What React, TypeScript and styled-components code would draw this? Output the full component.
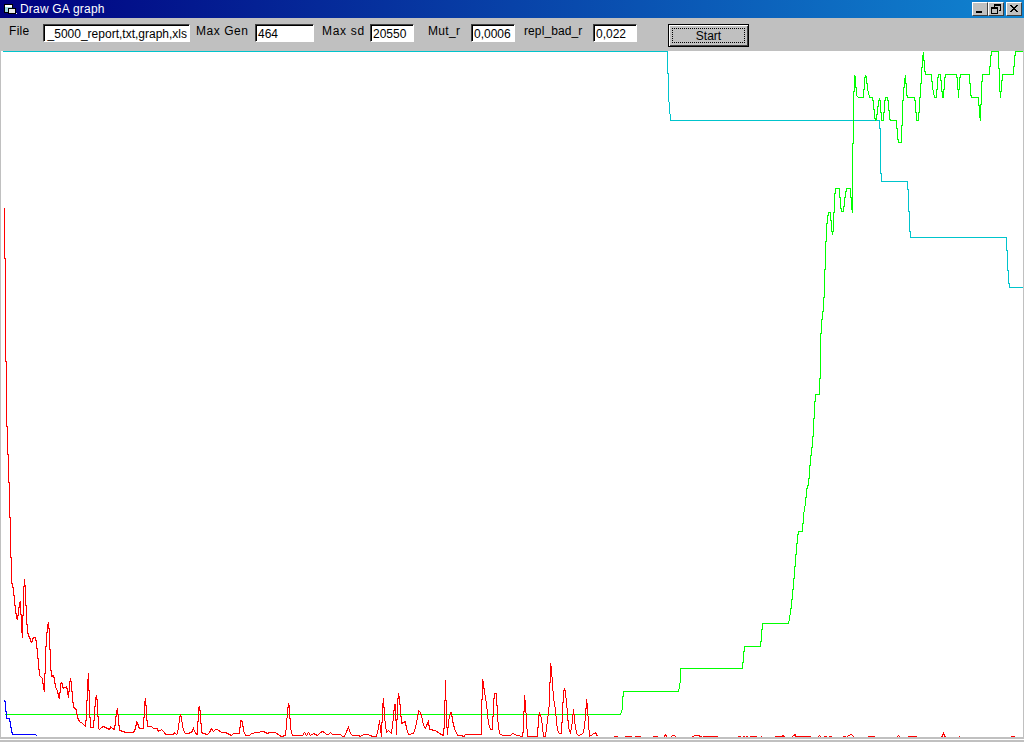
import styled, { createGlobalStyle } from "styled-components";

const GlobalStyle = createGlobalStyle`
  html, body {
    margin: 0;
    padding: 0;
    background: #c0c0c0;
  }
`;

const Window = styled.div`
  width: 1024px;
  height: 742px;
  display: flex;
  flex-direction: column;
  overflow: hidden;
  background: #c0c0c0;
  font-family: "Liberation Sans", Arial, sans-serif;
  font-size: 12px;
  color: #000;
`;

const TitleBar = styled.div`
  height: 18px;
  flex: none;
  display: flex;
  align-items: center;
  padding: 0 2px 0 4px;
  background: linear-gradient(90deg, #000080 0%, #1084d0 100%);
  color: #fff;
`;

const TitleText = styled.span`
  margin-left: 3px;
  letter-spacing: 0.2px;
`;

const TitleButtons = styled.div`
  margin-left: auto;
  display: flex;
`;

const TitleButton = styled.div<{ $gap?: number }>`
  width: 16px;
  height: 14px;
  box-sizing: border-box;
  margin-left: ${(props) => props.$gap ?? 0}px;
  display: flex;
  align-items: center;
  justify-content: center;
  background: #c0c0c0;
  border: 1px solid;
  border-color: #fff #404040 #404040 #fff;
`;

const Toolbar = styled.div`
  height: 33px;
  flex: none;
  display: flex;
  align-items: flex-start;
  padding-top: 6px;
  box-sizing: border-box;
`;

const Label = styled.span<{ $left: number; $width: number; $tracking?: number }>`
  margin-left: ${(props) => props.$left}px;
  width: ${(props) => props.$width}px;
  flex: none;
  line-height: 15px;
  letter-spacing: ${(props) => props.$tracking ?? 0.3}px;
  white-space: nowrap;
`;

const TextBox = styled.div<{ $left: number; $width: number; $right?: boolean }>`
  margin-left: ${(props) => props.$left}px;
  width: ${(props) => props.$width}px;
  height: 18px;
  flex: none;
  box-sizing: border-box;
  display: flex;
  align-items: center;
  justify-content: ${(props) => (props.$right ? "flex-end" : "flex-start")};
  padding: 1px 2px 0;
  overflow: hidden;
  white-space: nowrap;
  background: #fff;
  border: 1px solid;
  border-color: #404040 #fff #fff #404040;
  box-shadow: inset 1px 1px 0 #000;
`;

const StartButton = styled.div`
  margin-left: 31px;
  width: 81px;
  height: 23px;
  flex: none;
  box-sizing: border-box;
  padding: 3px;
  background: #c0c0c0;
  border: 1px solid #000;
  box-shadow: inset 1px 1px 0 #fff, inset -1px -1px 0 #404040;
`;

const StartFocus = styled.div`
  height: 100%;
  box-sizing: border-box;
  display: flex;
  align-items: center;
  justify-content: center;
  border: 1px dotted #000;
`;

const Plot = styled.div`
  height: 686px;
  flex: none;
  margin: 0 1px;
  background: #fff;
`;

const Chart = styled.svg`
  display: block;
`;

const Footer = styled.div`
  height: 5px;
  flex: none;
  box-sizing: border-box;
  border-top: 2px solid #c0c0c0;
  border-bottom: 2px solid #c0c0c0;
  background: #fff;
`;

const redMain =
  "4,207 4,258 5,258 5,361 6,361 6,426 7,426 7,454 8,454 8,482 9,482 9,517 10,517 10,557 11,557 11,581 13,589 14,600 15,610 16,616 17,619 18,610 19,604 20,600 21,627 22,637 23,593 24,578 25,592 26,617 27,631 28,635 30,639 31,642 32,639 33,637 35,637 36,642 37,653 38,662 39,675 41,677 42,678 43,687 44,691 45,654 46,637 47,627 48,621 49,635 50,663 51,676 53,675 54,678 55,687 57,690 58,695 59,698 60,685 61,681 62,685 63,688 66,686 67,690 68,697 69,685 70,677 71,685 72,697 73,707 75,708 76,710 77,717 79,721 82,723 85,726 86,713 87,686 88,672 89,707 90,727 93,727 94,712 95,700 96,694 97,703 98,728 99,729 101,727 103,726 107,728 109,729 110,726 112,728 114,729 115,720 116,712 117,707 118,720 119,730 123,731 125,732 133,732 135,728 136,721 138,725 139,728 143,728 144,705 145,697 146,713 147,726 151,726 153,728 157,728 158,731 161,729 164,732 165,734 173,734 174,732 176,734 177,733 179,719 180,713 181,718 183,730 185,733 187,733 191,732 193,728 195,733 197,734 198,707 199,706 200,713 201,732 203,733 207,734 209,732 211,728 213,731 215,729 217,729 221,732 225,732 229,734 231,735 233,733 239,733 240,720 242,721 243,730 245,735 249,735 251,733 257,732 263,731 267,733 269,732 275,732 279,735 281,736 285,735 287,712 288,702 289,708 290,728 292,735 302,735 304,732 306,735 308,732 310,735 313,733 317,735 320,732 322,731 324,732 326,734 328,734 330,732 332,734 340,734 342,736 344,736 346,731 348,727 350,733 352,735 358,735 360,736 363,734 367,734 370,735 372,736 376,736 378,728 379,720 381,736 382,708 383,697 384,717 386,732 388,730 391,733 393,717 394,703 395,705 396,734 397,703 398,692 399,700 400,708 401,723 405,721 406,728 408,734 413,733 415,727 417,717 418,710 420,712 421,715 423,725 425,728 428,720 429,729 435,730 439,733 443,735 444,720 445,679 446,720 447,734 448,720 450,713 451,711 452,720 454,728 457,735 462,735 463,737 465,734 481,734 481,720 482,678 483,683 484,692 486,703 488,723 490,729 492,729 493,703 494,693 496,693 497,717 499,733 502,735 510,735 512,733 517,735 522,736 523,727 524,694 525,705 527,736 537,736 538,718 539,712 541,718 543,736 545,736 547,720 549,702 550,662 551,670 553,697 555,710 557,730 559,733 561,733 562,710 563,693 564,687 565,692 567,712 568,727 570,733 572,720 573,708 574,720 576,733 578,735 583,733 585,717 586,698 587,708 589,736 592,734 595,732 597,736";

const redDashes = [
  "614,736 620,737 624,737 626,736 631,736",
  "634,736 637,736 640,736",
  "652,736 657,736",
  "664,736 665,734 667,737",
  "670,737 672,735 674,735 676,737",
  "692,736 695,735 698,735 702,737 704,736 717,736",
  "735,737 740,736 741,737 744,736 745,737 747,736 748,737 751,736 754,736 759,737 762,736",
  "774,736 781,736 783,735 784,737",
  "791,737 793,735 795,734 796,737 797,736 810,736",
  "817,737 819,735 821,737 826,736 827,737 830,736 833,737",
  "842,737 844,736 846,737 848,735 851,734 854,737",
  "867,736 874,736",
  "896,737 898,735 900,737",
  "907,736 916,736",
  "941,737 943,733 945,737",
  "958,736 959,736",
  "1010,736 1014,736",
];

const greenLine =
  "4,714 620,714 622,708 622,700 623,691 678,691 680,680 680,668 742,668 743,655 744,646 760,646 761,635 762,623 788,623 790,612 791,603 792,595 793,583 794,572 795,560 796,548 797,537 798,531 802,531 803,515 805,503 806,491 807,485 808,485 809,470 810,460 811,450 812,443 813,429 814,407 815,394 819,394 819,379 820,377 820,343 821,323 822,314 823,307 824,286 825,252 826,229 827,217 828,212 830,212 831,228 832,234 833,227 834,197 835,188 839,188 840,205 841,211 843,211 844,200 845,193 846,188 850,188 851,205 852,212 852,177 853,108 854,74 855,78 856,95 858,97 863,97 864,80 865,74 866,78 867,88 869,97 872,97 873,103 874,115 875,120 876,117 877,110 878,102 879,97 880,103 881,120 883,120 884,103 885,97 887,97 888,102 889,117 890,120 896,120 897,135 898,142 901,142 902,108 903,92 904,82 905,74 906,92 907,97 914,97 915,103 916,120 918,120 919,103 920,90 921,75 922,58 923,51 924,68 925,74 931,74 932,87 934,97 936,97 937,80 938,74 940,74 941,85 942,97 943,97 944,80 945,74 956,74 957,80 958,97 959,80 960,74 969,74 970,92 971,97 978,97 979,113 980,120 981,87 982,74 989,74 990,58 991,51 998,51 999,85 1000,97 1001,85 1002,74 1013,74 1014,58 1015,51 1023,51";

const cyanLine =
  "2,51 667,51 668,95 670,120 879,120 880,135 880,165 881,181 907,181 908,196 909,225 910,237 1006,237 1007,262 1008,278 1009,287 1023,287";

const blueLine = "4,699 5,703 6,718 9,718 10,723 11,730 12,734 35,734 37,736";

// a steep one-column segment is two vertical runs that meet halfway, like a GDI line
const toRuns = (points: string) => {
  const pairs = points.split(" ");
  return pairs
    .map((pair, i) => {
      if (i === 0) return pair;
      const [x1, y1] = pairs[i - 1].split(",").map(Number);
      const [x2, y2] = pair.split(",").map(Number);
      if (x2 - x1 !== 1 || Math.abs(y2 - y1) < 2) return pair;
      const mid = Math.round((y1 + y2) / 2);
      return `${x1},${mid} ${x2},${mid} ${pair}`;
    })
    .join(" ");
};

const DrawingGroup = styled.g`
  fill: none;
  shape-rendering: crispEdges;
`;

const App = () => {
  return (
    <Window>
      <GlobalStyle />
      <TitleBar>
        <svg width="13" height="12" viewBox="0 0 13 12" shapeRendering="crispEdges">
          <rect x="0" y="1" width="9" height="9" fill="#000" />
          <rect x="1" y="2" width="7" height="2" fill="#fff" />
          <rect x="1" y="4" width="7" height="5" fill="#9fd8e0" />
          <rect x="4" y="5" width="8" height="6" fill="#000" />
          <rect x="5" y="6" width="6" height="4" fill="#e8e8e8" />
          <rect x="12" y="10" width="1" height="1" fill="#fff" />
        </svg>
        <TitleText>Draw GA graph</TitleText>
        <TitleButtons>
          <TitleButton>
            <svg width="10" height="10" viewBox="0 0 10 10" shapeRendering="crispEdges">
              <rect x="1" y="7" width="6" height="2" fill="#000" />
            </svg>
          </TitleButton>
          <TitleButton>
            <svg width="10" height="10" viewBox="0 0 10 10" shapeRendering="crispEdges" fill="none" stroke="#000">
              <path d="M3.5 2.5V0.5H9.5V6.5H7.5M3.5 1.5H9.5" />
              <path d="M0.5 3.5H6.5V9.5H0.5ZM0.5 4.5H6.5" />
            </svg>
          </TitleButton>
          <TitleButton $gap={2}>
            <svg width="10" height="10" viewBox="0 0 10 10">
              <path d="M1 1L8 8M2 1L9 8M8 1L1 8M9 1L2 8" stroke="#000" strokeWidth="1" fill="none" />
            </svg>
          </TitleButton>
        </TitleButtons>
      </TitleBar>
      <Toolbar>
        <Label $left={9} $width={19}>File</Label>
        <TextBox $left={15} $width={147} $right>_5000_report,txt,graph,xls</TextBox>
        <Label $left={6} $width={53} $tracking={0.55}>Max Gen</Label>
        <TextBox $left={6} $width={59}>464</TextBox>
        <Label $left={8} $width={43} $tracking={0.7}>Max sd</Label>
        <TextBox $left={5} $width={44}>20550</TextBox>
        <Label $left={14} $width={33}>Mut_r</Label>
        <TextBox $left={10} $width={44}>0,0006</TextBox>
        <Label $left={9} $width={60} $tracking={0.1}>repl_bad_r</Label>
        <TextBox $left={9} $width={44}>0,022</TextBox>
        <StartButton>
          <StartFocus>Start</StartFocus>
        </StartButton>
      </Toolbar>
      <Plot>
        <Chart width="1022" height="686" viewBox="1 51 1022 686">
          <DrawingGroup transform="translate(0.5 0.5)">
            <polyline points={toRuns(cyanLine)} stroke="#00c4cc" />
            <polyline points={toRuns(greenLine)} stroke="#00ff00" />
            <polyline points={toRuns(blueLine)} stroke="#0000ff" />
            <polyline points={toRuns(redMain)} stroke="#ff0000" />
            {redDashes.map((points) => (
              <polyline key={points} points={toRuns(points)} stroke="#ff0000" />
            ))}
          </DrawingGroup>
        </Chart>
      </Plot>
      <Footer />
    </Window>
  );
};

export default App;
